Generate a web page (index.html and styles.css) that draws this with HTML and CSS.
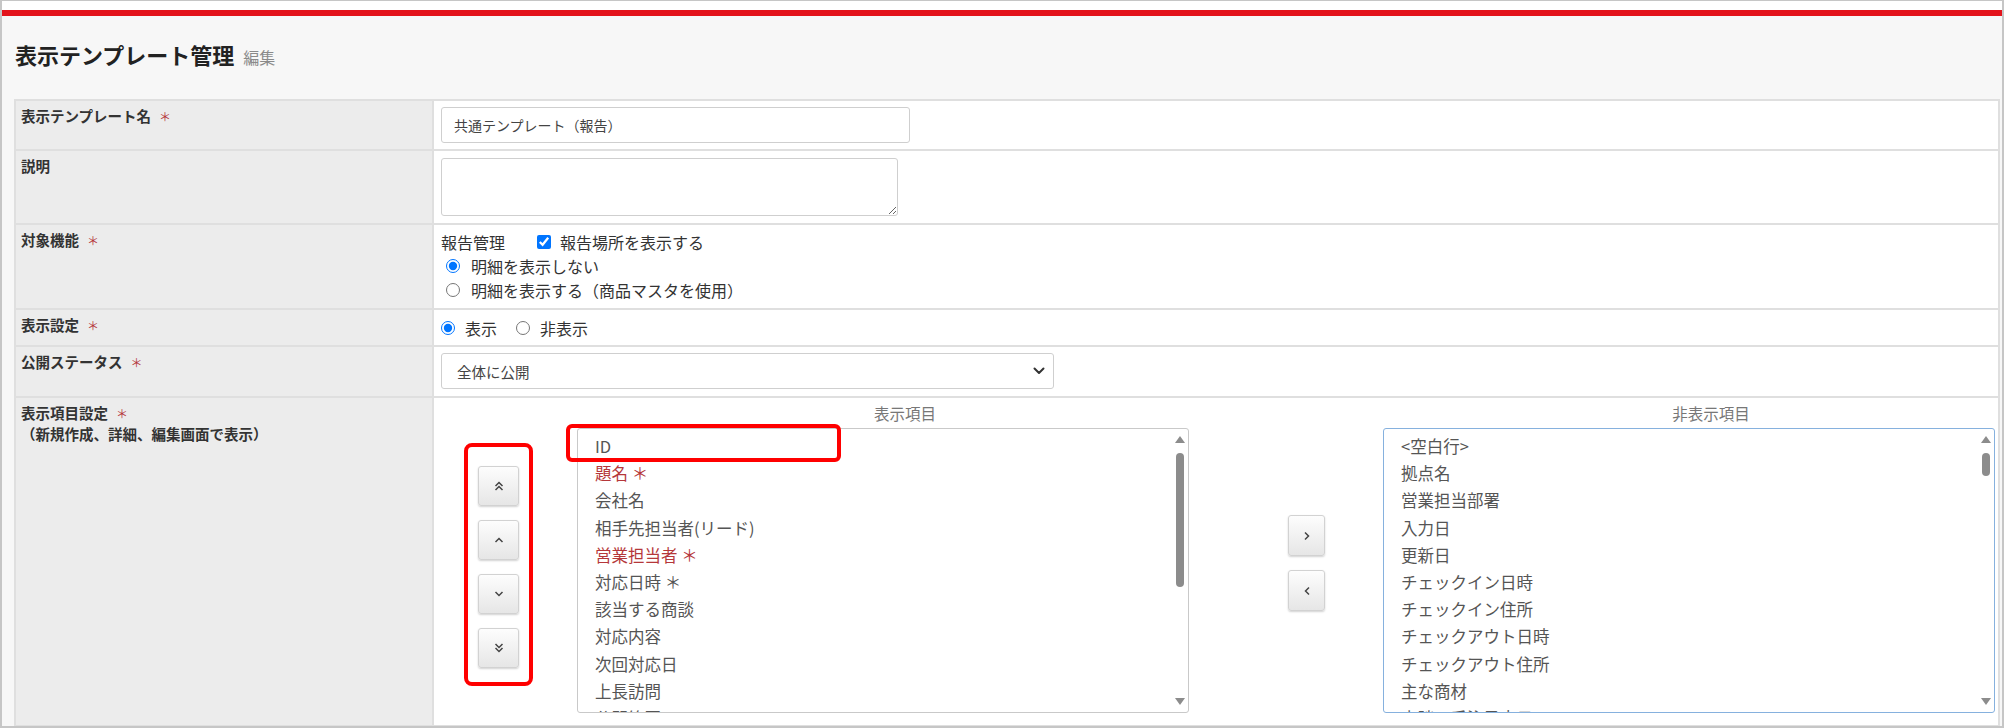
FILE: index.html
```html
<!DOCTYPE html>
<html lang="ja">
<head>
    <meta charset="UTF-8">
    <meta name="viewport" content="width=device-width, initial-scale=1.0">
    <title>表示テンプレート管理 - 編集</title>
    <link rel="stylesheet" href="styles.css">
</head>
<body>
    <div class="frame">
        <div class="topbar"></div>
        <div class="page">
            <h1 class="page-title">表示テンプレート管理<small>編集</small></h1>

            <table class="form-table">
                <tr class="row-name">
                    <th>表示テンプレート名<span class="req">＊</span></th>
                    <td><input type="text" class="text-input" value="共通テンプレート（報告）"></td>
                </tr>
                <tr class="row-desc">
                    <th>説明</th>
                    <td><textarea class="memo"></textarea></td>
                </tr>
                <tr class="row-target">
                    <th>対象機能<span class="req">＊</span></th>
                    <td>
                        <div class="opt-line">
                            <span class="opt-name">報告管理</span>
                            <label class="check"><input type="checkbox" checked>報告場所を表示する</label>
                        </div>
                        <div class="opt-line sub">
                            <label class="radio"><input type="radio" name="detail" checked>明細を表示しない</label>
                        </div>
                        <div class="opt-line sub">
                            <label class="radio"><input type="radio" name="detail">明細を表示する（商品マスタを使用）</label>
                        </div>
                    </td>
                </tr>
                <tr class="row-show">
                    <th>表示設定<span class="req">＊</span></th>
                    <td>
                        <div class="opt-line">
                            <label class="radio"><input type="radio" name="show" checked>表示</label>
                            <label class="radio"><input type="radio" name="show">非表示</label>
                        </div>
                    </td>
                </tr>
                <tr class="row-status">
                    <th>公開ステータス<span class="req">＊</span></th>
                    <td>
                        <div class="select-wrap">
                            <select class="select-input">
                                <option>全体に公開</option>
                                <option>自分のみ</option>
                            </select>
                            <svg class="select-arrow" width="12" height="8" viewBox="0 0 12 8"><path d="M1.5 1.5 L6 6 L10.5 1.5" fill="none" stroke="#333" stroke-width="2" stroke-linecap="round" stroke-linejoin="round"/></svg>
                        </div>
                    </td>
                </tr>
                <tr class="row-items">
                    <th>表示項目設定<span class="req">＊</span><br>（新規作成、詳細、編集画面で表示）</th>
                    <td>
                        <div class="picker">
                            <!-- order buttons -->
                            <div class="order-box">
                                <button class="btn">
                                    <svg width="12" height="12" viewBox="0 0 12 12"><path d="M2.5 6 L6 2.5 L9.5 6 M2.5 10 L6 6.5 L9.5 10" fill="none" stroke="#444" stroke-width="1.5"/></svg>
                                </button>
                                <button class="btn">
                                    <svg width="12" height="12" viewBox="0 0 12 12"><path d="M2.5 8 L6 4.5 L9.5 8" fill="none" stroke="#444" stroke-width="1.5"/></svg>
                                </button>
                                <button class="btn">
                                    <svg width="12" height="12" viewBox="0 0 12 12"><path d="M2.5 4 L6 7.5 L9.5 4" fill="none" stroke="#444" stroke-width="1.5"/></svg>
                                </button>
                                <button class="btn">
                                    <svg width="12" height="12" viewBox="0 0 12 12"><path d="M2.5 2 L6 5.5 L9.5 2 M2.5 6 L6 9.5 L9.5 6" fill="none" stroke="#444" stroke-width="1.5"/></svg>
                                </button>
                            </div>

                            <!-- shown items -->
                            <div class="list-col">
                                <div class="list-head">表示項目</div>
                                <div class="listbox">
                                    <div class="item">ID</div>
                                    <div class="item must">題名 ＊</div>
                                    <div class="item">会社名</div>
                                    <div class="item">相手先担当者(リード)</div>
                                    <div class="item must">営業担当者 ＊</div>
                                    <div class="item">対応日時 ＊</div>
                                    <div class="item">該当する商談</div>
                                    <div class="item">対応内容</div>
                                    <div class="item">次回対応日</div>
                                    <div class="item">上長訪問</div>
                                    <div class="item">公開範囲</div>
                                    <div class="scrollbar">
                                        <span class="arrow-up"></span>
                                        <span class="thumb thumb-long"></span>
                                        <span class="arrow-down"></span>
                                    </div>
                                </div>
                                <div class="mark-id"></div>
                            </div>

                            <!-- move buttons -->
                            <div class="move-col">
                                <button class="btn btn-move">
                                    <svg width="10" height="12" viewBox="0 0 10 12"><path d="M3 2.5 L6.5 6 L3 9.5" fill="none" stroke="#444" stroke-width="1.5"/></svg>
                                </button>
                                <button class="btn btn-move">
                                    <svg width="10" height="12" viewBox="0 0 10 12"><path d="M7 2.5 L3.5 6 L7 9.5" fill="none" stroke="#444" stroke-width="1.5"/></svg>
                                </button>
                            </div>

                            <!-- hidden items -->
                            <div class="list-col">
                                <div class="list-head">非表示項目</div>
                                <div class="listbox focus">
                                    <div class="item">&lt;空白行&gt;</div>
                                    <div class="item">拠点名</div>
                                    <div class="item">営業担当部署</div>
                                    <div class="item">入力日</div>
                                    <div class="item">更新日</div>
                                    <div class="item">チェックイン日時</div>
                                    <div class="item">チェックイン住所</div>
                                    <div class="item">チェックアウト日時</div>
                                    <div class="item">チェックアウト住所</div>
                                    <div class="item">主な商材</div>
                                    <div class="item">商談の受注予定日</div>
                                    <div class="scrollbar">
                                        <span class="arrow-up"></span>
                                        <span class="thumb thumb-short"></span>
                                        <span class="arrow-down"></span>
                                    </div>
                                </div>
                            </div>
                        </div>
                    </td>
                </tr>
            </table>
        </div>
    </div>
</body>
</html>
```

FILE: styles.css
```css
body {
    margin: 0;
    padding: 0;
    width: 2004px;
    height: 728px;
    overflow: hidden;
    font-family: "Noto Sans CJK JP", "Noto Sans", sans-serif;
    color: #333;
}

.frame {
    box-sizing: border-box;
    width: 2004px;
    height: 728px;
    border: 2px solid #c6c6c6;
    border-top-width: 1px;
    background-color: #f7f7f7;
    overflow: hidden;
}

.topbar {
    height: 9px;
    background-color: #fff;
    border-bottom: 6px solid #e3131b;
}

.page {
    padding: 0 0 0 12px;
}

.page-title {
    margin: 0;
    padding: 23px 0 0 1px;
    height: 60px;
    font-size: 22px;
    line-height: 30px;
    font-weight: bold;
    color: #222;
    box-sizing: border-box;
}

.page-title small {
    margin-left: 9px;
    font-size: 16px;
    font-weight: normal;
    color: #8a8a8a;
}

/* form table */
.form-table {
    width: 1986px;
    table-layout: fixed;
    border-collapse: separate;
    border-spacing: 0;
    border-top: 2px solid #dfdfdf;
    border-left: 2px solid #dfdfdf;
    margin-top: 23px;
}

.form-table th,
.form-table td {
    border-right: 2px solid #dfdfdf;
    border-bottom: 2px solid #dfdfdf;
    vertical-align: top;
    text-align: left;
}

.form-table th {
    width: 406px;
    padding: 5px 5px;
    background-color: #ececec;
    font-size: 14.5px;
    line-height: 20px;
    font-weight: bold;
    color: #333;
}

.form-table td {
    padding: 6px 3px 6px 7px;
    background-color: #fff;
    font-size: 16px;
    line-height: 24px;
    color: #333;
}

.req {
    margin-left: 8px;
    font-size: 12px;
    font-weight: normal;
    color: #b5373a;
}

.row-desc td { padding-top: 7px; padding-bottom: 7px; }
.row-target td { padding-top: 5px; padding-bottom: 6px; }
.row-show td { padding-top: 6px; padding-bottom: 5px; }
.row-status td { padding-top: 6px; padding-bottom: 7px; }
.row-items td { padding-top: 5px; padding-bottom: 12px; }

.text-input {
    box-sizing: border-box;
    width: 469px;
    height: 36px;
    padding: 0 12px;
    border: 1px solid #cfcfcf;
    border-radius: 3px;
    font-family: inherit;
    font-size: 14px;
    color: #444;
    display: block;
}

.memo {
    box-sizing: border-box;
    width: 457px;
    height: 58px;
    border: 1px solid #cfcfcf;
    border-radius: 3px;
    display: block;
    margin: 0;
}

.opt-line {
    display: flex;
    align-items: center;
    height: 24px;
}

.opt-line.sub {
    padding-left: 5px;
}

.opt-name {
    margin-right: 32px;
}

.check,
.radio {
    display: flex;
    align-items: center;
}

.check input {
    width: 14px;
    height: 14px;
    margin: 0 9px 0 0;
}

.radio input {
    width: 14px;
    height: 14px;
    margin: 0 11px 0 0;
}

.row-show .radio input {
    margin-right: 10px;
}

.row-show .radio + .radio {
    margin-left: 19px;
}

.select-wrap {
    position: relative;
    width: 613px;
}

.select-input {
    box-sizing: border-box;
    width: 613px;
    height: 36px;
    padding: 0 15px;
    border: 1px solid #cfcfcf;
    border-radius: 3px;
    background-color: #fff;
    font-family: inherit;
    font-size: 14.5px;
    color: #444;
    appearance: none;
    -webkit-appearance: none;
    display: block;
}

.select-arrow {
    position: absolute;
    right: 9px;
    top: 14px;
}

/* item picker */
.picker {
    display: flex;
    align-items: flex-start;
}

.order-box {
    box-sizing: border-box;
    width: 69px;
    margin: 40px 0 0 23px;
    padding: 19px 10px 14px;
    border: 4px solid #ff0000;
    border-radius: 8px;
    display: flex;
    flex-direction: column;
    gap: 14px;
}

.btn {
    width: 41px;
    height: 40px;
    padding: 0;
    border: 1px solid #d2d2d2;
    border-radius: 3px;
    background: linear-gradient(#fdfdfd, #e6e6e6);
    box-shadow: 0 1px 2px rgba(0, 0, 0, 0.18);
    display: flex;
    align-items: center;
    justify-content: center;
}

.list-col {
    position: relative;
    width: 612px;
    margin-left: 44px;
}

.list-head {
    padding-left: 44px;
    text-align: center;
    font-size: 15.5px;
    line-height: 20px;
    color: #777;
}

.listbox {
    position: relative;
    box-sizing: border-box;
    height: 285px;
    margin-top: 5px;
    padding: 4px 0 0 17px;
    border: 1px solid #c9c9c9;
    border-radius: 3px;
    overflow: hidden;
}

.listbox.focus {
    border-color: #86b1de;
}

.item {
    font-size: 16.5px;
    line-height: 27.2px;
    color: #555;
    white-space: nowrap;
}

.item.must {
    color: #b5373a;
}

.scrollbar {
    position: absolute;
    top: 0;
    right: 0;
    bottom: 0;
    width: 16px;
}

.arrow-up,
.arrow-down {
    position: absolute;
    left: 3px;
    width: 0;
    height: 0;
    border-left: 5px solid transparent;
    border-right: 5px solid transparent;
}

.arrow-up {
    top: 7px;
    border-bottom: 7px solid #8c8c8c;
}

.arrow-down {
    bottom: 7px;
    border-top: 7px solid #8c8c8c;
}

.thumb {
    position: absolute;
    left: 4px;
    width: 8px;
    border-radius: 4px;
    background-color: #8c8c8c;
}

.thumb-long {
    top: 24px;
    height: 134px;
}

.thumb-short {
    top: 24px;
    height: 23px;
}

.mark-id {
    position: absolute;
    left: -11px;
    top: 21px;
    box-sizing: border-box;
    width: 275px;
    height: 38px;
    border: 4px solid #ff0000;
    border-radius: 6px;
}

.move-col {
    margin: 112px 0 0 99px;
    display: flex;
    flex-direction: column;
    gap: 14px;
}

.btn-move {
    width: 37px;
    height: 41px;
}

.move-col + .list-col {
    margin-left: 58px;
}
```
